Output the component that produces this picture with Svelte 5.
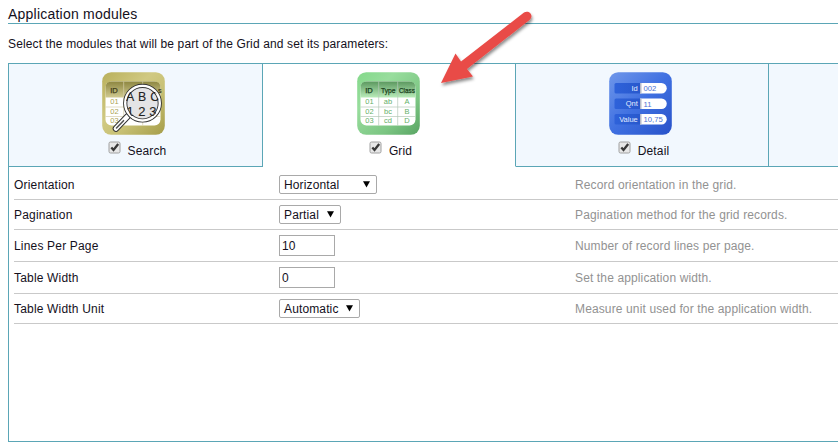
<script>
  let tabs = $state([
    { id: 'search', label: 'Search', checked: true },
    { id: 'grid', label: 'Grid', checked: true },
    { id: 'detail', label: 'Detail', checked: true }
  ]);
  const rows = [
    { label: 'Orientation', kind: 'select', value: 'Horizontal', width: 98, hint: 'Record orientation in the grid.' },
    { label: 'Pagination', kind: 'select', value: 'Partial', width: 62, hint: 'Pagination method for the grid records.' },
    { label: 'Lines Per Page', kind: 'input', value: '10', width: 56, hint: 'Number of record lines per page.' },
    { label: 'Table Width', kind: 'input', value: '0', width: 56, hint: 'Set the application width.' },
    { label: 'Table Width Unit', kind: 'select', value: 'Automatic', width: 81, hint: 'Measure unit used for the application width.' }
  ];
  const cells = [['01', 'ab', 'A'], ['02', 'bc', 'B'], ['03', 'cd', 'D']];
  const fields = [['Id', '002'], ['Qnt', '11'], ['Value', '10,75']];
</script>

{#snippet table(id, line, text, head)}
  <rect x="3.500" y="9.500" width="55" height="44" rx="6" fill="#fff" />
  <path d="M3.500 25.500V15.500Q3.500 9.500 9.500 9.500H52.500Q58.500 9.500 58.500 15.500V25.500Z" fill="url(#{id}-head)" />
  <path d="M3.500 35H58.500M3.500 44.500H58.500M21.700 9.500V53.500M40.700 9.500V53.500" stroke={line} stroke-width=".7" fill="none" />
  <g font-size="7.600" fill={head} stroke={head} stroke-width=".25" text-anchor="middle">
    <text x="12" y="21">ID</text>
    {#if id === 'grid'}
      <text x="31.200" y="21" textLength="14.500" lengthAdjust="spacingAndGlyphs">Type</text>
      <text x="50" y="21" textLength="16" lengthAdjust="spacingAndGlyphs">Class</text>
    {:else}
      <text x="57.800" y="21" font-size="7">s</text>
    {/if}
  </g>
  <g font-size="7.500" fill={text} text-anchor="middle">
    {#each cells as row, i}
      <text x="12.500" y={32.300 + i * 9.500}>{row[0]}</text>
      {#if id === 'grid'}
        <text x="31" y={32.300 + i * 9.500}>{row[1]}</text>
        <text x="50" y={32.300 + i * 9.500}>{row[2]}</text>
      {/if}
    {/each}
  </g>
{/snippet}

<div class="page">
  <h1>Application modules</h1>
  <p>Select the modules that will be part of the Grid and set its parameters:</p>

  <div class="panel">
    <div class="tabs">
      {#each tabs as tab}
        <div class="tab {tab.id}">
          <svg class="icon" viewBox="0 0 63 63" width="63" height="63">
            <defs>
              <linearGradient id="{tab.id}-bg" x1="0" y1="0" x2="1" y2="1">
                {#if tab.id === 'search'}
                  <stop offset="0" stop-color="#b9b05c" /><stop offset=".4" stop-color="#d0c982" /><stop offset=".6" stop-color="#c9c277" /><stop offset="1" stop-color="#a59d49" />
                {:else if tab.id === 'grid'}
                  <stop offset="0" stop-color="#84d98b" /><stop offset=".3" stop-color="#98dd9d" /><stop offset=".7" stop-color="#7bc582" /><stop offset="1" stop-color="#59a463" />
                {:else}
                  <stop offset="0" stop-color="#6f97ea" /><stop offset=".5" stop-color="#3f70e1" /><stop offset="1" stop-color="#2852c9" />
                {/if}
              </linearGradient>
              <linearGradient id="{tab.id}-head" x1="0" y1="0" x2="0" y2="1">
                <stop offset="0" stop-color={tab.id === 'search' ? '#8e8741' : '#5b985f'} />
                <stop offset="1" stop-color={tab.id === 'search' ? '#d0ca91' : '#b9ecb9'} />
              </linearGradient>
              <linearGradient id="field-bg"><stop offset="0" stop-color="#2e62da" /><stop offset="1" stop-color="#2858cc" /></linearGradient>
            </defs>
            <rect x=".2" y=".2" width="62.600" height="62.600" rx="9" fill="url(#{tab.id}-bg)" />
            {#if tab.id === 'search'}
              {@render table('search', '#d5cfaa', '#aaa354', '#3d3b18')}
              <path d="M25.500 44.500L14 56.500" stroke="#333" stroke-width="6.600" stroke-linecap="round" />
              <path d="M25.500 44.500L14 56.500" stroke="#fff" stroke-width="4.600" stroke-linecap="round" />
              <path d="M21.500 48.700L14.500 56" stroke="#555" stroke-width="1.600" stroke-linecap="round" />
              <circle cx="40.500" cy="31.200" r="17.300" fill="#e4e4e6" stroke="#333" stroke-width="4.200" />
              <circle cx="40.500" cy="31.200" r="17.300" fill="none" stroke="#fff" stroke-width="2.400" />
              <clipPath id="lens"><circle cx="40.500" cy="31.200" r="16.800" /></clipPath>
              <g clip-path="url(#lens)" font-size="12.300" fill="#222" stroke="#222" stroke-width=".1" text-anchor="middle">
                <text x="28" y="28.500">A</text><text x="40.200" y="28.500">B</text><text x="52.700" y="28.500">C</text>
                <g font-size="13"><text x="28.200" y="44">1</text><text x="39.800" y="44">2</text><text x="50.800" y="44">3</text></g>
              </g>
            {:else if tab.id === 'grid'}
              {@render table('grid', '#b5c9b7', '#65b069', '#173d1a')}
            {:else}
              {#each fields as field, i}
                <rect x="5.500" y={11 + i * 15.500} width="27" height="10.500" rx="1.500" fill="url(#field-bg)" />
                <path transform="translate(0 {i * 15.5})" d="M31 11H52.500A5.200 5.200 0 0 1 52.500 21.500H31Z" fill="#fff" />
                <rect x="31" y={11 + i * 15.500} width="1.500" height="10.500" fill="#b6bac8" />
                <text x="28.800" y={18.900 + i * 15.500} font-size="7.500" fill="#e3ecff" text-anchor="end">{field[0]}</text>
                <text x="34.500" y={19 + i * 15.500} font-size="7.700" fill="#4a72d4">{field[1]}</text>
              {/each}
            {/if}
          </svg>
          <label>
            <input type="checkbox" bind:checked={tab.checked} />
            <svg class="check" viewBox="0 0 13 13" width="13" height="13">
              <rect x="1" y="1" width="11" height="11" rx="1.500" fill="#e7e7e7" stroke="#a0a0a0" />
              {#if tab.checked}
                <path d="M3.300 6.500L5.500 8.900L10.200 3" fill="none" stroke="#383838" stroke-width="2.300" />
              {/if}
            </svg>
            <span>{tab.label}</span>
          </label>
        </div>
      {/each}
      <div class="tab rest"></div>
    </div>

    <div class="rows">
      {#each rows as row}
        <div class="row">
          <span class="name">{row.label}</span>
          <div class="control">
            {#if row.kind === 'select'}
              <div class="select" style="width: {row.width}px">
                <span>{row.value}</span>
                <svg viewBox="0 0 7 7" width="7" height="7"><path d="M0 .3H7L3.500 6.600Z" fill="#000" /></svg>
              </div>
            {:else}
              <input class="text" value={row.value} style="width: {row.width}px" />
            {/if}
          </div>
          <span class="hint">{row.hint}</span>
        </div>
      {/each}
    </div>
  </div>

  <svg class="arrow" viewBox="0 0 120 95" width="120" height="95">
    <defs>
      <filter id="shade" x="-20%" y="-20%" width="140%" height="150%">
        <feDropShadow dx="1" dy="2.500" stdDeviation="1.700" flood-color="#000" flood-opacity=".45" />
      </filter>
    </defs>
    <path filter="url(#shade)" d="M11 83L25.500 53.500L31 61.500L94 12.500C99 9.500 104.500 15.500 99.500 20L37 69L43 76.500Z" fill="#e94b47" />
  </svg>
</div>

<style>
  :global(body) { background: #fff; overflow: hidden; }
  .page {
    position: relative;
    box-sizing: border-box;
    width: 838px;
    height: 444px;
    padding-left: 8px;
    overflow: hidden;
    font-family: "Liberation Sans", Arial, sans-serif;
    font-size: 12px;
    letter-spacing: .13px;
    color: #14101c;
  }
  svg { letter-spacing: 0; }
  h1 {
    box-sizing: border-box;
    height: 24px;
    margin: 0;
    padding-top: 6px;
    border-bottom: 1px solid #5ba6b6;
    font-size: 14px;
    line-height: 16px;
    font-weight: normal;
    letter-spacing: .22px;
  }
  p { height: 39px; margin: 0; line-height: 40px; }
  .panel {
    box-sizing: border-box;
    height: 379px;
    border: 1px solid #5ba6b6;
    border-right: 0;
  }
  .tabs { display: flex; height: 103px; }
  .tab {
    box-sizing: border-box;
    display: flex;
    flex-direction: column;
    align-items: center;
    width: 253px;
    padding-top: 8px;
    border-right: 1px solid #5ba6b6;
    border-bottom: 1px solid #5ba6b6;
    background: #f2f8fe;
  }
  .search { width: 254px; }
  .grid { border-bottom-color: #fff; background: #fff; }
  .rest { flex: 1; border-right: 0; }
  .icon { display: block; margin-right: 3px; }
  .search .icon { margin-right: 4px; }
  .grid .icon { margin-right: 2px; }
  label {
    position: relative;
    display: flex;
    align-items: center;
    gap: 7px;
    height: 16px;
    margin-top: 6px;
    padding-left: 3px;
  }
  label input { position: absolute; opacity: 0; margin: 0; }
  .check { display: block; margin-top: -3px; }
  label span { line-height: 16px; padding-top: 3px; }
  .rows { padding: 3px 0 0 5px; }
  .row {
    display: flex;
    align-items: center;
    padding: 5px 0;
    border-bottom: 1px solid #c9c9c9;
  }
  .name { width: 265px; letter-spacing: .18px; }
  .control { width: 296px; }
  .select {
    box-sizing: border-box;
    display: flex;
    align-items: center;
    justify-content: space-between;
    height: 19px;
    padding: 0 6px 0 4px;
    border: 1px solid #a9a9a9;
    border-radius: 2px;
    background: #fff;
  }
  .text {
    display: block;
    box-sizing: border-box;
    height: 21px;
    margin: 0;
    padding: 1px 2px;
    border: 1px solid #a9a9a9;
    font: inherit;
    color: inherit;
  }
  .hint { color: #929292; white-space: nowrap; }
  .arrow { position: absolute; left: 430px; top: 0; pointer-events: none; }
</style>
